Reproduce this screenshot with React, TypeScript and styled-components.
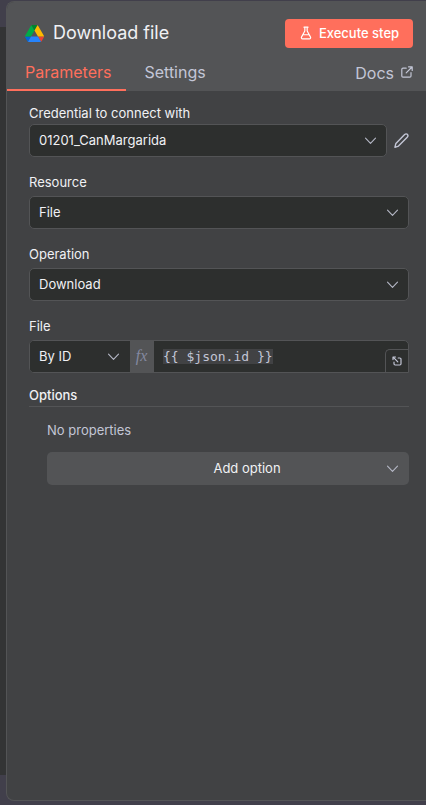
import React from "react";
import styled, { createGlobalStyle } from "styled-components";

const GlobalStyle = createGlobalStyle`
  *, *::before, *::after { box-sizing: border-box; }
  body {
    margin: 0;
    background: #413f4b;
    color: #f0f1f4;
    font-family: Inter, "Open Sans", sans-serif;
    font-size: 13px;
    line-height: 18px;
  }
  button, select, input { font: inherit; color: inherit; }
`;

const Backdrop = styled.div`
  display: flex;
  min-height: 100vh;
  padding: 1px 0 4px 6px;
  background: linear-gradient(#333435, #333435) no-repeat 0 27px / 100% calc(100% - 57px) #413f4b;
`;

const Panel = styled.main`
  flex: 1;
  min-width: 0;
  background: #414244;
  border: 1px solid #535456;
  border-right: 0;
  border-radius: 8px 0 0 8px;
  overflow: hidden;
`;

const Header = styled.header`
  background: #535456;
`;

const TitleRow = styled.div`
  display: flex;
  align-items: center;
  gap: 9px;
  height: 52px;
  padding: 10px 13px 0 18px;
`;

const Title = styled.h1`
  flex: 1;
  margin: 0;
  font-size: 18px;
  line-height: 24px;
  font-weight: 400;
`;

const ExecuteButton = styled.button`
  display: flex;
  align-items: center;
  justify-content: center;
  gap: 6px;
  width: 128px;
  height: 29px;
  padding: 0;
  border: 0;
  border-radius: 4px;
  background: #ff6f5c;
  color: #fff;
  font-weight: 500;
`;

const Tabs = styled.nav`
  display: flex;
  height: 37px;
  padding-right: 13px;
  font-size: 16px;
  line-height: 20px;
`;

const Tab = styled.button<{ $active?: boolean }>`
  padding: 0 15px 0 18px;
  border: 0;
  border-bottom: 2px solid ${(p) => (p.$active ? "#ff6f5c" : "transparent")};
  background: none;
  color: ${(p) => (p.$active ? "#ff6f5c" : "#c3c6d6")};
`;

const DocsLink = styled.a`
  display: flex;
  align-items: center;
  gap: 7px;
  margin-left: auto;
  color: #c3c6d6;
  text-decoration: none;
`;

const Form = styled.form`
  display: flex;
  flex-direction: column;
  padding: 13px 17px 24px 22px;
`;

const Field = styled.div<{ $tight?: boolean }>`
  display: flex;
  flex-direction: column;
  gap: ${(p) => (p.$tight ? 2 : 5)}px;
  margin-bottom: 16px;
`;

const Row = styled.div`
  display: flex;
  align-items: center;
`;

const SelectBox = styled.div<{ $joined?: boolean; $filled?: boolean }>`
  position: relative;
  flex: ${(p) => (p.$joined ? "0 0 100px" : "1")};
  height: ${(p) => (p.$joined ? "31px" : "33px")};
  border: ${(p) => (p.$joined || p.$filled ? "0" : "1px solid #535456")};
  border-radius: ${(p) => (p.$joined ? "0" : "5px")};
  background: ${(p) => (p.$filled ? "#535456" : "#2d2f2e")};
  svg {
    position: absolute;
    right: ${(p) => (p.$joined || p.$filled ? 10 : 9)}px;
    top: 50%;
    translate: 0 -50%;
    pointer-events: none;
  }
`;

const Select = styled.select<{ $center?: boolean }>`
  appearance: none;
  display: block;
  width: 100%;
  height: 100%;
  padding: 0 36px 2px 9px;
  ${(p) => p.$center && "padding: 0 0 2px 38px; text-align: center; text-align-last: center;"}
  border: 0;
  background: none;
  outline: 0;
`;

const IconButton = styled.button`
  display: flex;
  padding: 0;
  margin: 0 0 0 7px;
  border: 0;
  background: none;
  color: #c3c6d6;
`;

const Locator = styled.div`
  position: relative;
  display: flex;
  height: 33px;
  border: 1px solid #535456;
  border-radius: 5px 5px 0 5px;
  background: #2d2f2e;
  overflow: hidden;
`;

const FxBadge = styled.span`
  flex: 0 0 25px;
  margin-left: -1px;
  background: #535456;
  color: #8489a0;
  font-family: "Liberation Serif", serif;
  font-size: 16px;
  font-style: italic;
  line-height: 29px;
  text-align: center;
`;

const Expression = styled.input`
  flex: 1;
  min-width: 0;
  padding: 0;
  border: 0;
  outline: 0;
  background: none;
`;

const ExpressionBox = styled.div`
  flex: 1;
  display: flex;
  align-items: center;
  min-width: 0;
  padding: 0 32px 0 9px;
  font-family: "DejaVu Sans Mono", "Liberation Mono", monospace;
  font-size: 13px;
  line-height: 15px;
  color: #c3c6d6;
  ${Expression} {
    flex: 0 0 auto;
    width: 14ch;
    height: 15px;
    font: inherit;
    background: #414244;
  }
`;

const ExpandButton = styled.button`
  position: absolute;
  right: 0;
  bottom: 0;
  display: flex;
  align-items: center;
  justify-content: center;
  width: 23px;
  height: 23px;
  padding: 0;
  border: 1px solid #535456;
  border-width: 1px 0 0 1px;
  border-radius: 5px 0 0 0;
  background: #2d2f2e;
  color: #c3c6d6;
`;

const SectionTitle = styled.h2`
  margin: -4px 0 0;
  padding-bottom: 1px;
  border-bottom: 1px solid #535456;
  font-size: 13px;
  line-height: 20px;
  font-weight: 500;
`;

const Options = styled.div`
  display: flex;
  flex-direction: column;
  padding: 14px 0 0 18px;
`;

const Empty = styled.p`
  margin: 0 0 13px;
  color: #c3c6d6;
`;

const DriveLogo = () => (
  <svg width="19" height="17" viewBox="0 0 87.3 78" aria-hidden="true">
    <path fill="#0066da" d="m6.6 66.85 3.85 6.65c.8 1.4 1.95 2.5 3.3 3.3l13.75-23.8h-27.5c0 1.55.4 3.1 1.2 4.5z" />
    <path fill="#00ac47" d="m43.65 25-13.75-23.8c-1.35.8-2.5 1.9-3.3 3.3l-25.4 44a9 9 0 0 0-1.2 4.5h27.5z" />
    <path fill="#ea4335" d="m73.55 76.8c1.35-.8 2.5-1.9 3.3-3.3l1.6-2.75 7.65-13.25c.8-1.4 1.2-2.95 1.2-4.5h-27.5l5.85 11.5z" />
    <path fill="#00832d" d="m43.65 25 13.75-23.8c-1.35-.8-2.9-1.2-4.5-1.2h-18.5c-1.6 0-3.15.45-4.5 1.2z" />
    <path fill="#2684fc" d="m59.8 53h-32.3l-13.75 23.8c1.35.8 2.9 1.2 4.5 1.2h50.8c1.6 0 3.15-.45 4.5-1.2z" />
    <path fill="#ffba00" d="m73.4 26.5-12.7-22c-.8-1.4-1.95-2.5-3.3-3.3l-13.75 23.8 16.15 28h27.45c0-1.55-.4-3.1-1.2-4.5z" />
  </svg>
);

const stroke = {
  fill: "none",
  stroke: "currentColor",
  strokeLinecap: "round",
  strokeLinejoin: "round",
  "aria-hidden": true,
} as const;

const Flask = () => (
  <svg width="14" height="14" viewBox="0 0 24 24" strokeWidth="2" {...stroke}>
    <path d="M14 2v6a2 2 0 0 0 .245.96l5.51 10.08A2 2 0 0 1 18 22H6a2 2 0 0 1-1.755-2.96l5.51-10.08A2 2 0 0 0 10 8V2M6.453 15h11.094M8.5 2h7" />
  </svg>
);

const External = () => (
  <svg width="12" height="14" viewBox="0 0 12 14" strokeWidth="1.2" {...stroke}>
    <path d="M7.5.8h3.7v3.7M11 1 5.2 6.8M5.2 2.2H2A1.2 1.2 0 0 0 .8 3.4V10A1.2 1.2 0 0 0 2 11.2h6.8A1.2 1.2 0 0 0 10 10V6.5" />
  </svg>
);

const Chevron = () => (
  <svg width="13" height="8" viewBox="0 0 13 8" strokeWidth="1.1" color="#b5b8c6" {...stroke}>
    <path d="m1.5 1.2 5 5.2 5-5.2" />
  </svg>
);

const Pencil = () => (
  <svg width="15" height="16" viewBox="0 0 15 16" strokeWidth="1.4" {...stroke}>
    <path d="M10.4 1.8c1.1-1.1 2.2-1.1 3-.4.8.8.8 1.9-.2 2.9L4.5 13.1l-3.6 1.2 1-3.9z" />
  </svg>
);

const Expand = () => (
  <svg width="10" height="10" viewBox="0 0 10 10" strokeWidth="1.2" {...stroke}>
    <path d="M1 3.6V1h2.6M1.2 1.2l4.6 4.6M6.2 2h1.6A1.2 1.2 0 0 1 9 3.2v4.6A1.2 1.2 0 0 1 7.8 9H3.2A1.2 1.2 0 0 1 2 7.8V6.2" />
  </svg>
);

type SelectFieldProps = { id: string; label: string; value: string };

const SelectField = ({ id, label, value }: SelectFieldProps) => (
  <Field>
    <label htmlFor={id}>{label}</label>
    <Row>
      <SelectBox>
        <Select id={id}>
          <option>{value}</option>
        </Select>
        <Chevron />
      </SelectBox>
    </Row>
  </Field>
);

export default function App() {
  return (
    <Backdrop>
      <GlobalStyle />
      <Panel>
        <Header>
          <TitleRow>
            <DriveLogo />
            <Title>Download file</Title>
            <ExecuteButton type="button">
              <Flask />
              Execute step
            </ExecuteButton>
          </TitleRow>
          <Tabs>
            <Tab type="button" $active>Parameters</Tab>
            <Tab type="button">Settings</Tab>
            <DocsLink href="#docs">
              Docs
              <External />
            </DocsLink>
          </Tabs>
        </Header>
        <Form>
          <Field $tight>
            <label htmlFor="credential">Credential to connect with</label>
            <Row>
              <SelectBox>
                <Select id="credential">
                  <option>01201_CanMargarida</option>
                </Select>
                <Chevron />
              </SelectBox>
              <IconButton type="button" aria-label="Edit credential">
                <Pencil />
              </IconButton>
            </Row>
          </Field>
          <SelectField id="resource" label="Resource" value="File" />
          <SelectField id="operation" label="Operation" value="Download" />
          <Field>
            <label htmlFor="file-expression">File</label>
            <Locator>
              <SelectBox $joined>
                <Select aria-label="File selection mode">
                  <option>By ID</option>
                </Select>
                <Chevron />
              </SelectBox>
              <FxBadge>fx</FxBadge>
              <ExpressionBox>
                <Expression id="file-expression" defaultValue="{{ $json.id }}" />
              </ExpressionBox>
              <ExpandButton type="button" aria-label="Open expression editor">
                <Expand />
              </ExpandButton>
            </Locator>
          </Field>
          <SectionTitle>Options</SectionTitle>
          <Options>
            <Empty>No properties</Empty>
            <Row>
              <SelectBox $filled>
                <Select $center aria-label="Add option">
                  <option>Add option</option>
                </Select>
                <Chevron />
              </SelectBox>
            </Row>
          </Options>
        </Form>
      </Panel>
    </Backdrop>
  );
}
